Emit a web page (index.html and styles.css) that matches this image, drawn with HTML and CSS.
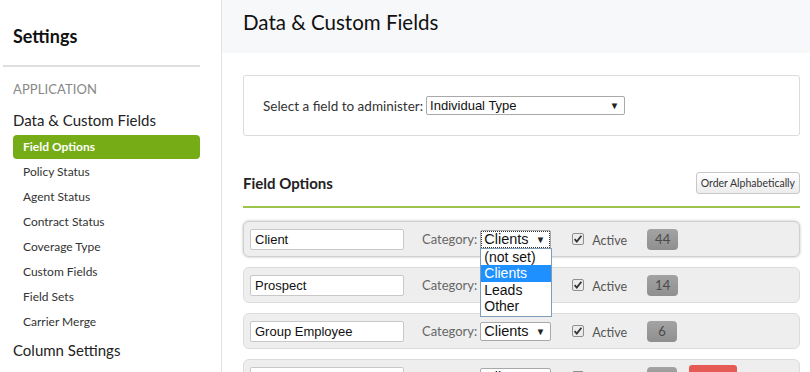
FILE: index.html
```html
<!DOCTYPE html>
<html>
<head>
<meta charset="utf-8">
<link rel="stylesheet" href="styles.css">
</head>
<body>
<div class="app">
  <aside class="sidebar">
    <h1 class="side-title">Settings</h1>
    <div class="side-divider"></div>
    <div class="side-section">APPLICATION</div>
    <div class="side-group">Data &amp; Custom Fields</div>
    <div class="side-item active">Field Options</div>
    <div class="side-item">Policy Status</div>
    <div class="side-item">Agent Status</div>
    <div class="side-item">Contract Status</div>
    <div class="side-item">Coverage Type</div>
    <div class="side-item">Custom Fields</div>
    <div class="side-item">Field Sets</div>
    <div class="side-item">Carrier Merge</div>
    <div class="side-group col">Column Settings</div>
  </aside>
  <main class="main">
    <header class="main-header">Data &amp; Custom Fields</header>
    <div class="content">
      <div class="panel">
        <span class="panel-label">Select a field to administer:</span>
        <div class="select wide"><span>Individual Type</span><span class="arrow">▼</span></div>
      </div>
      <div class="section-head">
        <h2 class="section-title">Field Options</h2>
        <button class="btn">Order Alphabetically</button>
      </div>
      <div class="rows">
        <div class="row focused">
          <div class="input">Client</div>
          <span class="cat-label">Category:</span>
          <div class="select small focus"><span>Clients</span><span class="arrow">▼</span>
            <div class="dropdown">
              <div class="opt">(not set)</div>
              <div class="opt sel">Clients</div>
              <div class="opt">Leads</div>
              <div class="opt">Other</div>
            </div>
          </div>
          <span class="check"><svg width="12" height="12" viewBox="0 0 12 12"><rect x="0.5" y="0.5" width="11" height="11" rx="1.5" fill="#ececec" stroke="#8f8f8f"/><path d="M2.6 6.2 L4.8 8.6 L9.4 2.8" fill="none" stroke="#333" stroke-width="1.8"/></svg></span>
          <span class="active-label">Active</span>
          <span class="badge">44</span>
        </div>
        <div class="row">
          <div class="input">Prospect</div>
          <span class="cat-label">Category:</span>
          <div class="select small"><span>Clients</span><span class="arrow">▼</span></div>
          <span class="check"><svg width="12" height="12" viewBox="0 0 12 12"><rect x="0.5" y="0.5" width="11" height="11" rx="1.5" fill="#ececec" stroke="#8f8f8f"/><path d="M2.6 6.2 L4.8 8.6 L9.4 2.8" fill="none" stroke="#333" stroke-width="1.8"/></svg></span>
          <span class="active-label">Active</span>
          <span class="badge">14</span>
        </div>
        <div class="row">
          <div class="input">Group Employee</div>
          <span class="cat-label">Category:</span>
          <div class="select small"><span>Clients</span><span class="arrow">▼</span></div>
          <span class="check"><svg width="12" height="12" viewBox="0 0 12 12"><rect x="0.5" y="0.5" width="11" height="11" rx="1.5" fill="#ececec" stroke="#8f8f8f"/><path d="M2.6 6.2 L4.8 8.6 L9.4 2.8" fill="none" stroke="#333" stroke-width="1.8"/></svg></span>
          <span class="active-label">Active</span>
          <span class="badge">6</span>
        </div>
        <div class="row">
          <div class="input">Medicare Client</div>
          <span class="cat-label">Category:</span>
          <div class="select small"><span>Clients</span><span class="arrow">▼</span></div>
          <span class="check"><svg width="12" height="12" viewBox="0 0 12 12"><rect x="0.5" y="0.5" width="11" height="11" rx="1.5" fill="#ececec" stroke="#8f8f8f"/><path d="M2.6 6.2 L4.8 8.6 L9.4 2.8" fill="none" stroke="#333" stroke-width="1.8"/></svg></span>
          <span class="active-label">Active</span>
          <span class="badge">2</span>
          <span class="btn-red">Delete</span>
        </div>
      </div>
    </div>
  </main>
</div>
</body>
</html>
```

FILE: styles.css
```css
* { box-sizing: border-box; }
html, body { margin: 0; padding: 0; }
body {
  font-family: Lato, "Open Sans", sans-serif;
  color: #333;
  background: #fff;
  width: 810px;
  height: 372px;
  overflow: hidden;
}
.app { display: flex; height: 372px; overflow: hidden; }

.sidebar {
  width: 222px;
  flex: none;
  border-right: 1px solid #e2e2e2;
  padding: 25px 21px 0 13px;
}
.side-title {
  margin: 0;
  font-size: 18px;
  line-height: 22px;
  font-weight: 700;
  color: #111;
}
.side-divider {
  height: 2px;
  background: #dedede;
  margin: 18px 0 0 -10px;
}
.side-section {
  margin-top: 14px;
  font-size: 13px;
  line-height: 16px;
  color: #888;
  letter-spacing: 0.1px;
}
.side-group {
  margin-top: 13px;
  font-size: 15px;
  line-height: 20px;
  color: #222;
}
.side-group.col { margin-top: 3px; line-height: 26px; }
.side-item {
  font-size: 12px;
  line-height: 25px;
  padding-left: 10px;
  color: #333;
}
.side-item.active {
  margin-top: 5px;
  background: #76ad17;
  color: #fff;
  font-weight: 700;
  border-radius: 4px;
  line-height: 24px;
}

.main { flex: 1; min-width: 0; overflow: hidden; }
.main-header {
  height: 53px;
  background: #f7f8fa;
  padding: 10px 0 0 21px;
  font-size: 20.5px;
  line-height: 24px;
  color: #111;
}
.content { padding: 22px 10px 0 21px; }

.panel {
  height: 61px;
  border: 1px solid #dcdcdc;
  border-radius: 3px;
  display: flex;
  align-items: center;
  padding-left: 19px;
  gap: 3px;
}
.panel-label { font-size: 13.5px; color: #333; }

.select {
  position: relative;
  display: flex;
  align-items: center;
  justify-content: space-between;
  background: #fff;
  border: 1px solid #a9a9a9;
  border-radius: 2px;
  font-family: Arial, "Liberation Sans", sans-serif;
  color: #111;
  padding: 0 5px 0 3px;
}
.select.wide { width: 199px; height: 19px; font-size: 13px; }
.arrow { font-size: 9.5px; color: #222; }
.select.small { width: 71px; height: 19px; font-size: 14.5px; }
.select.focus { outline: 1px dotted #333; outline-offset: -2px; border-color: #a9a9a9; }

.section-head {
  margin-top: 36px;
  height: 21px;
  display: flex;
  align-items: center;
  justify-content: space-between;
}
.section-title {
  margin: 0;
  font-size: 15px;
  font-weight: 700;
  color: #222;
}
.btn {
  height: 22px;
  padding: 0 4px;
  border: 1px solid #c8c8c8;
  border-radius: 3px;
  background: linear-gradient(#fff, #ececec);
  font-family: Lato, sans-serif;
  font-size: 10.5px;
  color: #333;
}
.rows {
  margin-top: 13px;
  border-top: 2px solid #9cc44a;
  padding-top: 13px;
  display: flex;
  flex-direction: column;
  gap: 10px;
}
.row {
  height: 36px;
  flex: none;
  display: flex;
  align-items: center;
  background: #eee;
  border: 1px solid #dcdcdc;
  border-radius: 6px;
  padding-left: 6px;
}
.row.focused {
  border-color: #cfcfcf;
  box-shadow: 0 0 2px 1px rgba(0,0,0,0.12);
}
.input {
  width: 154px;
  height: 21px;
  background: #fff;
  border: 1px solid #c8c8c8;
  border-radius: 2px;
  font-family: Arial, "Liberation Sans", sans-serif;
  font-size: 13px;
  line-height: 19px;
  color: #111;
  padding-left: 4px;
  overflow: hidden;
  white-space: nowrap;
}
.cat-label {
  margin-left: 18px;
  font-size: 13px;
  color: #666;
  margin-right: 3px;
}
.check { margin-left: 21px; display: flex; }
.active-label { margin-left: 8px; font-size: 12.5px; color: #555; margin-top: 2px; }
.badge {
  margin-left: 20px;
  min-width: 30px;
  height: 21px;
  padding: 0 8px;
  border-radius: 4px;
  background: linear-gradient(#a3a3a3, #8f8f8f);
  color: #4a4a4a;
  font-size: 13px;
  line-height: 21px;
  text-align: center;
}
.btn-red {
  margin-left: 12px;
  width: 48px;
  height: 24px;
  border-radius: 3px;
  background: #e55a55;
  color: #fff;
  font-size: 12px;
  line-height: 24px;
  text-align: center;
}
.dropdown {
  position: absolute;
  left: -1px;
  top: 17px;
  width: 72px;
  background: #fff;
  border: 1px solid #7f9db9;
  z-index: 5;
  padding: 0 0 1px;
}
.opt {
  font-family: Arial, "Liberation Sans", sans-serif;
  font-size: 14px;
  line-height: 16.5px;
  padding-left: 3px;
  color: #111;
}
.opt.sel { background: #1e90ff; color: #fff; }
```
